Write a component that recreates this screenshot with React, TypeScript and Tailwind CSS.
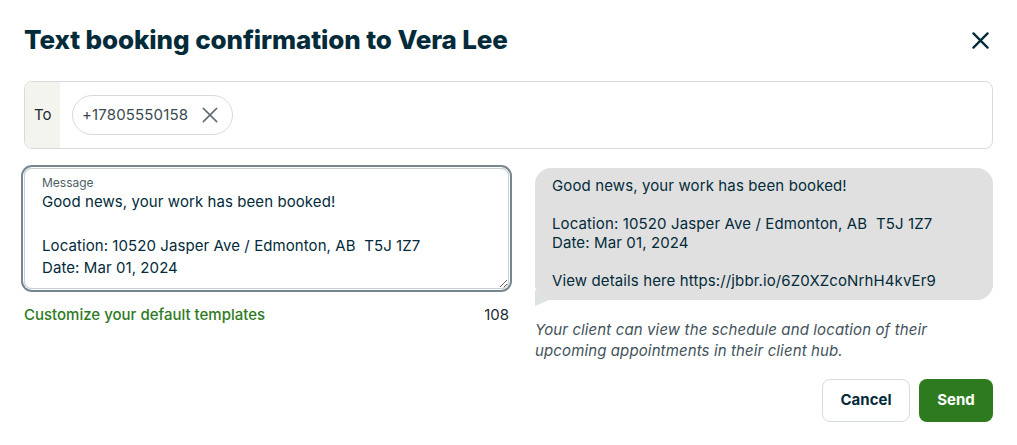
import React from "react";

const CloseIcon = ({ size, stroke, className }: { size: number; stroke: number; className?: string }) => (
  <svg width={size} height={size} viewBox="0 0 24 24" className={className} fill="none">
    <path d="M2 2L22 22M22 2L2 22" stroke="currentColor" strokeWidth={stroke} strokeLinecap="round" />
  </svg>
);

const message =
  "Good news, your work has been booked!\n\nLocation: 10520 Jasper Ave / Edmonton, AB  T5J 1Z7\nDate: Mar 01, 2024";

export default function App() {
  return (
    <div className="w-[1017px] h-[445px] bg-white px-6 pt-6 font-['Inter',sans-serif] text-[#032b3a]">
      {/* Header */}
      <div className="flex items-center justify-between h-8">
        <h1 className="text-[26px] leading-8 font-extrabold tracking-[-0.1px]">Text booking confirmation to Vera Lee</h1>
        <button className="mr-1 text-[#032b3a]">
          <CloseIcon size={17} stroke={3.2} />
        </button>
      </div>

      {/* To field */}
      <div className="mt-[25px] flex h-[68px] rounded-lg border border-[#d6dbdd] overflow-hidden">
        <div className="w-[35px] bg-[#f4f4ef] flex items-center text-[15px] text-[#1c2b31] pl-[9px]">To</div>
        <div className="flex items-center pl-[12px]">
          <div className="flex items-center h-10 rounded-full border border-[#d6dbdd] pl-[9px] pr-[14px] gap-[14px]">
            <span className="text-[15px] tracking-[0.15px] text-[#3a4a51]">+17805550158</span>
            <CloseIcon size={16} stroke={2.4} className="text-[#5f6e75]" />
          </div>
        </div>
      </div>

      {/* Body */}
      <div className="mt-[19px] grid grid-cols-[485px_1fr] gap-[26px]">
        <div>
          <div className="relative rounded-lg border border-[#c9d0d3] ring-2 ring-[#76878f] ring-offset-1">
            <span className="absolute left-[17px] top-[7px] text-[12px] leading-[14px] text-[#4f5f66]">Message</span>
            <textarea
              readOnly
              value={message}
              className="block w-full h-[119px] resize-y rounded-lg bg-transparent pt-[22px] pb-[9px] px-[17px] text-[15px] leading-[22px] tracking-[0.08px] text-[#032b3a] outline-none"
            />
          </div>
          <div className="mt-[16px] flex justify-between text-[15px] leading-5">
            <span className="font-medium text-[#2e7a1e]">Customize your default templates</span>
            <span className="text-[#1c2b31]">108</span>
          </div>
        </div>

        <div>
          <div className="relative">
            <div className="rounded-2xl bg-[#e0e0e0] pl-[17px] pr-4 pt-[8px] pb-[10px] text-[15px] leading-[19px] tracking-[0.12px] text-[#032b3a] whitespace-pre-wrap">
              {message + "\n\nView details here https://jbbr.io/6Z0XZcoNrhH4kvEr9"}
            </div>
            <svg width="14" height="16" viewBox="0 0 14 16" className="absolute left-0 bottom-[-6px]">
              <path d="M0 0L14 10L0 16Z" fill="#dde2e3" />
            </svg>
          </div>
          <p className="mt-[19px] text-[15px] leading-[21px] tracking-[0.12px] italic text-[#42525a] pr-8">
            Your client can view the schedule and location of their upcoming appointments in their client hub.
          </p>
        </div>
      </div>

      {/* Footer */}
      <div className="mt-[18px] flex justify-end gap-[9px]">
        <button className="h-[43px] w-[88px] rounded-lg border border-[#d6dbdd] text-[15px] font-bold text-[#032b3a]">Cancel</button>
        <button className="h-[43px] w-[74px] rounded-lg bg-[#2e7a1e] text-[15px] font-bold text-white">Send</button>
      </div>
    </div>
  );
}
